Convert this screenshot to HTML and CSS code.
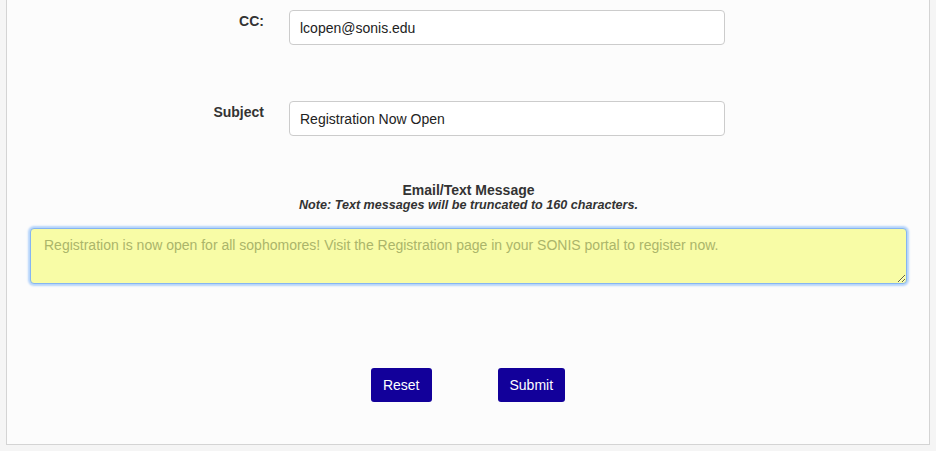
FILE: index.html
```html
<!DOCTYPE html>
<html lang="en">
<head>
    <meta charset="UTF-8">
    <title>Send Message</title>
    <link rel="stylesheet" href="styles.css">
</head>
<body>
    <div class="panel">
        <form class="message-form">
            <div class="form-row">
                <label class="form-label" for="ccInput">CC:</label>
                <input class="form-input" id="ccInput" type="text" value="lcopen@sonis.edu">
            </div>

            <div class="form-row">
                <label class="form-label" for="subjectInput">Subject</label>
                <input class="form-input" id="subjectInput" type="text" value="Registration Now Open">
            </div>

            <div class="message-section">
                <div class="message-title">Email/Text Message</div>
                <div class="message-note">Note: Text messages will be truncated to 160 characters.</div>
                <textarea class="message-box" id="messageBody">Registration is now open for all sophomores! Visit the Registration page in your SONIS portal to register now.</textarea>
            </div>

            <div class="button-row">
                <button class="form-button" type="reset">Reset</button>
                <button class="form-button" type="submit">Submit</button>
            </div>
        </form>
    </div>
</body>
</html>
```

FILE: styles.css
```css
* {
    box-sizing: border-box;
    margin: 0;
    padding: 0;
}

body {
    font-family: 'Liberation Sans', Arial, sans-serif;
    font-size: 14px;
    color: #333;
    background-color: #f5f5f5;
}

.panel {
    margin: 0 6px 7px 6px;
    background-color: #fcfcfc;
    border: 1px solid #d4d4d4;
    border-top: none;
}

.message-form {
    display: flex;
    flex-direction: column;
    padding: 10px 0 42px 0;
}

.form-row {
    display: flex;
    align-items: flex-start;
    gap: 25px;
}

.form-row + .form-row {
    margin-top: 56px;
}

.form-label {
    width: 257px;
    padding-top: 1px;
    text-align: right;
    font-weight: bold;
    line-height: 20px;
    color: #333;
}

.form-input {
    width: 436px;
    height: 35px;
    padding: 0 10px;
    font-family: inherit;
    font-size: 14px;
    color: #222;
    background-color: white;
    border: 1px solid #ccc;
    border-radius: 4px;
}

.message-section {
    display: flex;
    flex-direction: column;
    align-items: center;
    margin: 46px 22px 0 23px;
}

.message-title {
    font-weight: bold;
    line-height: 16px;
}

.message-note {
    font-size: 12.6px;
    font-weight: bold;
    font-style: italic;
    line-height: 14px;
}

.message-box {
    width: 100%;
    height: 56px;
    margin-top: 16px;
    padding: 6px 13px;
    font-family: inherit;
    font-size: 14px;
    line-height: 20px;
    color: #abb56a;
    background-color: #f8fca6;
    border: 1px solid #86b5f2;
    border-radius: 4px;
    box-shadow: 0 0 2px 2px #b5d4fb;
    outline: none;
}

.button-row {
    display: flex;
    justify-content: center;
    gap: 66px;
    margin-top: 84px;
}

.form-button {
    height: 34px;
    padding: 0 12px;
    font-family: inherit;
    font-size: 14px;
    color: white;
    background-color: #12009a;
    border: none;
    border-radius: 3px;
    cursor: pointer;
}
```
